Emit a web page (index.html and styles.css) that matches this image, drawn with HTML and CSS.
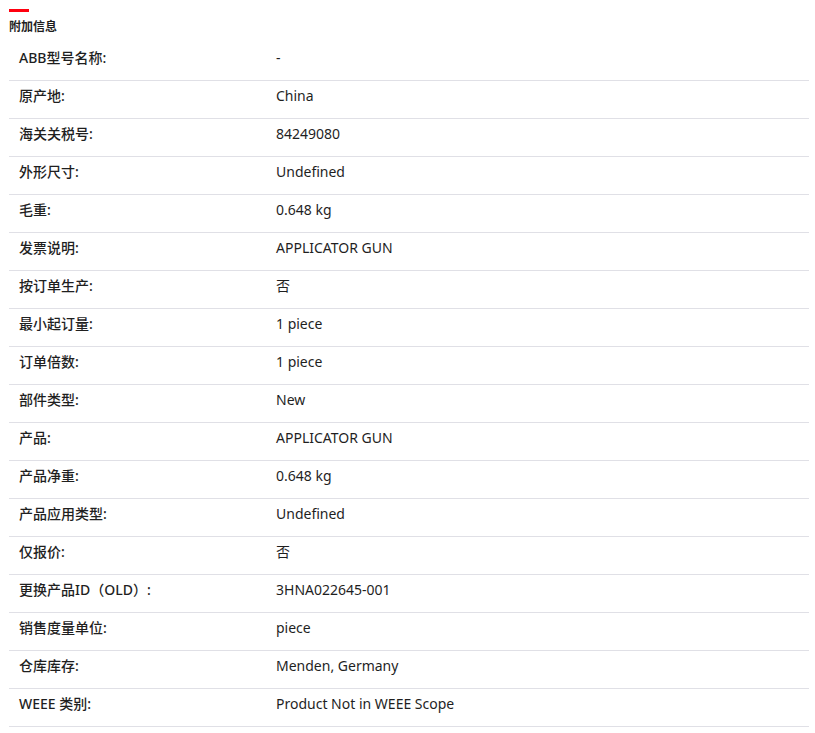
FILE: index.html
```html
<!DOCTYPE html>
<html lang="zh">
<head>
<meta charset="utf-8">
<link rel="stylesheet" href="styles.css">
</head>
<body>
<section class="info">
  <div class="accent"></div>
  <h2 class="title">附加信息</h2>
  <div class="table">
    <div class="row"><div class="label">ABB型号名称:</div><div class="value">-</div></div>
    <div class="row"><div class="label">原产地:</div><div class="value">China</div></div>
    <div class="row"><div class="label">海关关税号:</div><div class="value">84249080</div></div>
    <div class="row"><div class="label">外形尺寸:</div><div class="value">Undefined</div></div>
    <div class="row"><div class="label">毛重:</div><div class="value">0.648 kg</div></div>
    <div class="row"><div class="label">发票说明:</div><div class="value">APPLICATOR GUN</div></div>
    <div class="row"><div class="label">按订单生产:</div><div class="value">否</div></div>
    <div class="row"><div class="label">最小起订量:</div><div class="value">1 piece</div></div>
    <div class="row"><div class="label">订单倍数:</div><div class="value">1 piece</div></div>
    <div class="row"><div class="label">部件类型:</div><div class="value">New</div></div>
    <div class="row"><div class="label">产品:</div><div class="value">APPLICATOR GUN</div></div>
    <div class="row"><div class="label">产品净重:</div><div class="value">0.648 kg</div></div>
    <div class="row"><div class="label">产品应用类型:</div><div class="value">Undefined</div></div>
    <div class="row"><div class="label">仅报价:</div><div class="value">否</div></div>
    <div class="row"><div class="label">更换产品ID（OLD）:</div><div class="value">3HNA022645-001</div></div>
    <div class="row"><div class="label">销售度量单位:</div><div class="value">piece</div></div>
    <div class="row"><div class="label">仓库库存:</div><div class="value">Menden, Germany</div></div>
    <div class="row"><div class="label">WEEE 类别:</div><div class="value">Product Not in WEEE Scope</div></div>
  </div>
</section>
</body>
</html>
```
FILE: styles.css
```css
html, body {
  margin: 0;
  padding: 0;
  background: #ffffff;
}
body {
  font-family: "Noto Sans", "Noto Sans CJK SC", sans-serif;
  color: #1f1f1f;
}
.info {
  padding: 9px 6px 0 9px;
  width: 800px;
}
.accent {
  width: 20px;
  height: 3px;
  background: #ff000f;
}
.title {
  margin: 7px 0 0 0;
  font-size: 12px;
  line-height: 16px;
  font-weight: 700;
  color: #1f1f1f;
}
.table {
  margin-top: 8px;
  display: flex;
  flex-direction: column;
}
.row {
  display: grid;
  grid-template-columns: 257px 1fr;
  border-bottom: 1px solid #e0e0e6;
  font-size: 14px;
  line-height: 16px;
}
.label, .value {
  padding: 7px 10px 14px 10px;
}
.label {
  font-weight: 500;
}
.value {
  font-weight: 400;
}
```
